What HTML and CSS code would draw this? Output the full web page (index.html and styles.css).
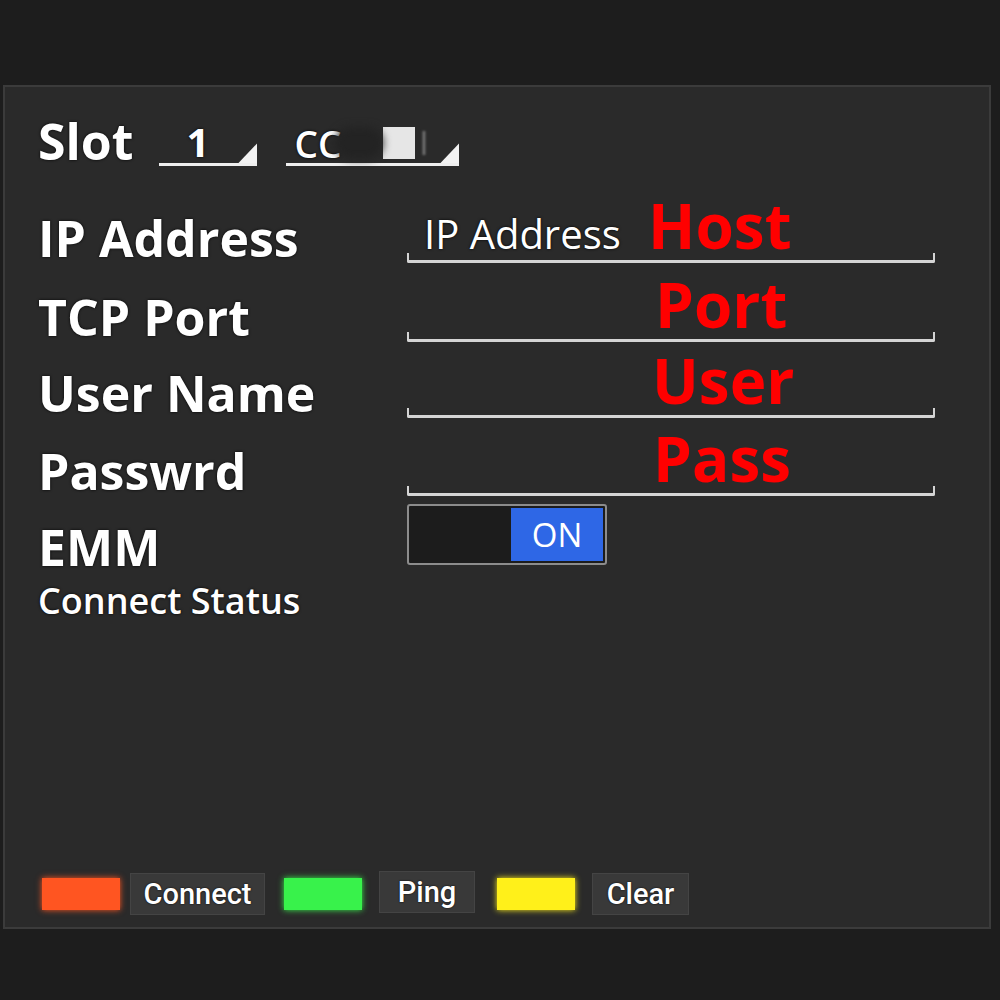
FILE: index.html
```html
<!DOCTYPE html>
<html>
<head>
<meta charset="utf-8">
<link rel="stylesheet" href="styles.css">
</head>
<body>
<div class="panel">
  <div class="slot-row">
    <span class="slot-label">Slot</span>
    <span class="dd dd-num"><span class="dd-text">1</span></span>
    <span class="dd dd-name"><span class="dd-text cc">CC</span><span class="blur-dark"></span><span class="blur-light"></span><span class="blur-i">I</span></span>
  </div>

  <div class="row r1">
    <div class="label">IP Address</div>
    <div class="field">
      <div class="field-text"><span class="placeholder">IP Address</span><span class="red">Host</span></div>
      <div class="line"></div>
    </div>
  </div>
  <div class="row r2">
    <div class="label">TCP Port</div>
    <div class="field">
      <div class="field-text"><span class="placeholder"></span><span class="red r-port">Port</span></div>
      <div class="line"></div>
    </div>
  </div>
  <div class="row r3">
    <div class="label">User Name</div>
    <div class="field">
      <div class="field-text"><span class="placeholder"></span><span class="red r-user">User</span></div>
      <div class="line"></div>
    </div>
  </div>
  <div class="row r4">
    <div class="label">Passwrd</div>
    <div class="field">
      <div class="field-text"><span class="placeholder"></span><span class="red r-pass">Pass</span></div>
      <div class="line"></div>
    </div>
  </div>
  <div class="row emm-row">
    <div class="label">EMM</div>
    <div class="toggle"><span class="t-off"></span><span class="t-on">ON</span></div>
  </div>
  <div class="status">Connect Status</div>

  <div class="actions">
    <span class="swatch orange"></span>
    <span class="btn b-connect">Connect</span>
    <span class="swatch green"></span>
    <span class="btn b-ping">Ping</span>
    <span class="swatch yellow"></span>
    <span class="btn b-clear">Clear</span>
  </div>
</div>
</body>
</html>
```

FILE: styles.css
```css
html, body {
  margin: 0;
  padding: 0;
  background: #1d1d1d;
  width: 1000px;
  height: 1000px;
  overflow: hidden;
}
body {
  font-family: "Open Sans", "DejaVu Sans", sans-serif;
  color: #fff;
}
.panel {
  box-sizing: border-box;
  margin: 85px 0 0 3px;
  width: 988px;
  height: 844px;
  background: #2a2a2a;
  border: 2px solid #3b3b3b;
  display: flex;
  flex-direction: column;
  padding: 0 0 12px 33px;
}
.slot-row {
  display: flex;
  align-items: flex-end;
  height: 79px;
}
.slot-label {
  font-weight: 700;
  font-size: 50px;
  line-height: 1;
  text-shadow: 0 0 3px #000;
  margin-right: 26px;
}
.dd {
  position: relative;
  display: inline-flex;
  align-items: flex-end;
  border-bottom: 3px solid #eee;
  height: 44px;
  box-sizing: border-box;
}
.dd::after {
  content: "";
  position: absolute;
  right: 0;
  bottom: 0;
  width: 19px;
  height: 20px;
  background: #f2f2f2;
  clip-path: polygon(100% 0, 100% 100%, 0 100%);
}
.dd-num {
  width: 98px;
  padding-left: 27px;
  margin-right: 29px;
}
.dd-name {
  width: 173px;
  padding-left: 8px;
}
.dd-text {
  font-weight: 700;
  font-size: 40px;
  line-height: 1;
  text-shadow: 0 0 3px #000;
  margin-bottom: 1px;
}
.cc {
  font-size: 37px;
  font-weight: 600;
}
.blur-dark {
  width: 48px;
  height: 32px;
  margin-left: -6px;
  margin-bottom: 4px;
  background: #232323;
  border-radius: 16px;
  filter: blur(4px);
}
.blur-light {
  width: 32px;
  height: 32px;
  margin-bottom: 4px;
  background: #e6e6e6;
}
.blur-i {
  font-size: 32px;
  color: #777;
  line-height: 1;
  margin-left: 4px;
  margin-bottom: 4px;
  filter: blur(1px);
}
.row {
  display: flex;
  align-items: flex-end;
  height: 79px;
}
.r1 { height: 97px; }
.r2 { height: 79px; }
.r3 { height: 76px; }
.r4 { height: 78px; }
.label {
  width: 369px;
  font-weight: 700;
  font-size: 50px;
  line-height: 1;
  text-shadow: 0 0 3px #000;
}
.field {
  width: 528px;
  display: flex;
  flex-direction: column;
}
.field-text {
  display: flex;
  align-items: baseline;
  height: 56px;
  padding-left: 17px;
}
.placeholder {
  width: 224px;
  font-size: 40px;
  line-height: 1;
  font-weight: 400;
  text-shadow: 0 0 3px #000;
}
.red {
  color: #ff0000;
  font-weight: 700;
  font-size: 62px;
  line-height: 56px;
}
.r-port { margin-left: 7px; }
.r-user { margin-left: 4px; }
.r-pass { margin-left: 5px; }
.line {
  height: 7px;
  border: 2px solid #d4d4d4;
  border-top: 0;
  border-bottom-width: 3px;
  border-radius: 0 0 2px 2px;
}
.emm-row {
  height: 76px;
  align-items: flex-start;
}
.emm-row .label {
  align-self: flex-end;
}
.toggle {
  margin-top: 8px;
  box-sizing: border-box;
  width: 200px;
  height: 61px;
  border: 2px solid #8c8c8c;
  border-radius: 3px;
  padding: 2px;
  display: flex;
  background: #1c1c1c;
}
.t-off {
  flex: 1;
  background: #1c1c1c;
}
.t-on {
  width: 92px;
  background: #2e67e6;
  color: #fff;
  font-size: 33px;
  font-weight: 500;
  display: flex;
  align-items: center;
  justify-content: center;
  line-height: 1;
}
.status {
  font-weight: 600;
  font-size: 36px;
  line-height: 1;
  margin-top: 11px;
  text-shadow: 0 0 3px #000;
}
.actions {
  margin-top: auto;
  display: flex;
  align-items: center;
  padding-left: 4px;
}
.swatch {
  width: 78px;
  height: 32px;
}
.orange { background: #ff5521; box-shadow: 0 0 6px #ff5521; }
.green { background: #38f24b; box-shadow: 0 0 6px #38f24b; }
.yellow { background: #fff01a; box-shadow: 0 0 6px #fff01a; }
.btn {
  box-sizing: border-box;
  height: 42px;
  background: #393939;
  border: 1px solid #444;
  font-family: Roboto, "Open Sans", sans-serif;
  font-weight: 500;
  font-size: 29px;
  display: flex;
  align-items: center;
  justify-content: center;
  text-shadow: 0 0 2px #000;
}
.b-connect { width: 135px; margin: 0 19px 0 10px; }
.b-ping { width: 96px; margin: -4px 22px 0 17px; }
.b-clear { width: 97px; margin-left: 17px; }
```
